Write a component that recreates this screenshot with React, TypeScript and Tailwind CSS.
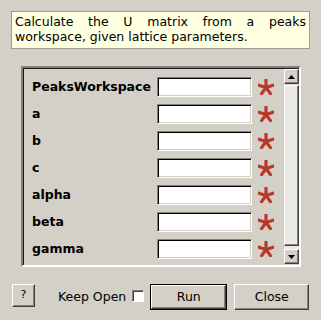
import { ReactNode } from "react";

const fields = ["PeaksWorkspace", "a", "b", "c", "alpha", "beta", "gamma"];

function Star() {
  // five-armed red "required" asterisk
  const arms = [
    [8, 1],
    [15.1, 6.2],
    [12.4, 14.6],
    [3.6, 14.6],
    [0.9, 6.2],
  ];
  return (
    <svg width="16" height="16" viewBox="0 0 16 16" className="shrink-0">
      {arms.map(([x, y], i) => (
        <line
          key={i}
          x1="8"
          y1="8.5"
          x2={x}
          y2={y}
          stroke="#b8382b"
          strokeWidth="3.2"
          strokeLinecap="round"
        />
      ))}
    </svg>
  );
}

function RaisedButton({ children, className }: { children: ReactNode; className: string }) {
  return (
    <div
      className={
        "flex items-center justify-center border border-t-white border-l-white border-b-[#404040] border-r-[#404040] shadow-[inset_-1px_-1px_0_#808080] " +
        className
      }
    >
      {children}
    </div>
  );
}

function Arrow({ up }: { up: boolean }) {
  return (
    <svg width="7" height="4" viewBox="0 0 7 4">
      <polygon points={up ? "0,4 7,4 3.5,0" : "0,0 7,0 3.5,4"} fill="#000" />
    </svg>
  );
}

export default function App() {
  return (
    <div className="w-[321px] h-[320px] bg-[#d4d0c8] flex flex-col pt-[11px] font-['DejaVu_Sans',sans-serif] text-black overflow-hidden">
      <div className="ml-[11px] w-[299px] h-[38px] bg-[#ffffe1] border border-[#a09c94] px-[3px] pt-[2px] text-[12.5px] leading-[15px] text-justify">
        Calculate the U matrix from a peaks workspace, given lattice parameters.
      </div>

      <div className="ml-[21px] mt-[17px] w-[280px] h-[201px] flex border-2 border-t-[#808080] border-l-[#808080] border-b-white border-r-white shadow-[inset_1px_1px_0_#1a1a1a]">
        <div className="flex-1 flex flex-col gap-[7px] pt-[9px] pl-[9px]">
          {fields.map((f) => (
            <div key={f} className="flex items-center h-[20px]">
              <span className="w-[125px] font-bold text-[12.5px]">{f}</span>
              <div className="w-[95px] h-[20px] bg-white border border-t-[#808080] border-l-[#808080] border-b-white border-r-white shadow-[inset_1px_1px_0_#000,inset_-1px_-1px_0_#d4d0c8]" />
              <div className="ml-[6px]">
                <Star />
              </div>
            </div>
          ))}
        </div>
        <div className="w-[15px] flex flex-col pt-[1px] pb-[1px]">
          <RaisedButton className="h-[15px] w-[15px]">
            <Arrow up />
          </RaisedButton>
          <div className="flex-1 mt-[1px] flex flex-col bg-[#ebe9e5]">
            <div className="flex-1 mb-[3px] border border-t-white border-l-white border-b-[#404040] border-r-[#404040] shadow-[inset_-1px_-1px_0_#808080]" />
          </div>
          <RaisedButton className="h-[15px] w-[15px]">
            <Arrow up={false} />
          </RaisedButton>
        </div>
      </div>

      <div className="mt-[17px] ml-[12px] flex items-start text-[12.5px]">
        <RaisedButton className="w-[23px] h-[23px] text-[11px]">?</RaisedButton>
        <span className="ml-[23px] mt-[4px]">Keep Open</span>
        <div className="ml-[6px] mt-[6px] w-[12px] h-[12px] bg-white border border-t-[#808080] border-l-[#808080] border-b-white border-r-white shadow-[inset_1px_1px_0_#404040]" />
        <div className="ml-[6px] w-[77px] h-[26px] border border-black">
          <RaisedButton className="w-full h-full">Run</RaisedButton>
        </div>
        <RaisedButton className="ml-[7px] w-[75px] h-[26px]">Close</RaisedButton>
      </div>
    </div>
  );
}
